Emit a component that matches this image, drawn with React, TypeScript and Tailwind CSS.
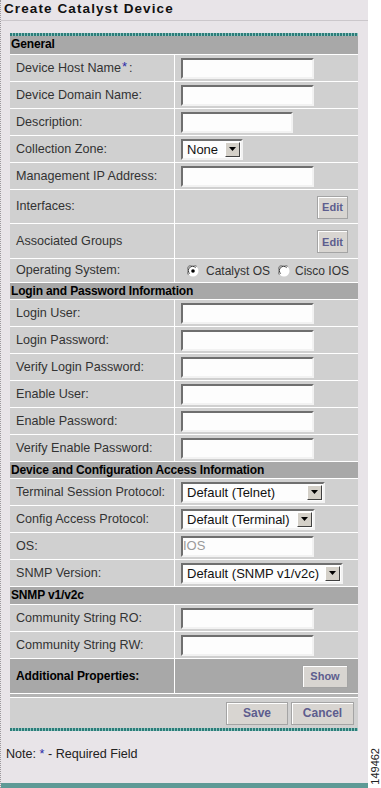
import React from "react";

// Classic sunken text field edge, shared by inputs and selects.
const inset =
  "border-2 border-t-[#6f6f6f] border-l-[#6f6f6f] border-b-[#f2f2f2] border-r-[#f2f2f2] bg-[#fdfdfd]";

function Header({ children, first }: { children: React.ReactNode; first?: boolean }) {
  return (
    <div
      className={
        first
          ? "h-[18px] bg-[#a8a8a8] pl-[1px] text-[12px] font-bold leading-[17px] tracking-[-0.15px] text-black"
          : "h-[17px] border-t border-white bg-[#a8a8a8] pl-[1px] text-[12px] font-bold leading-[16px] tracking-[-0.15px] text-black"
      }
    >
      {children}
    </div>
  );
}

function Row({
  label,
  h = "h-[27px]",
  children,
}: {
  label: React.ReactNode;
  h?: string;
  children?: React.ReactNode;
}) {
  return (
    <div className={`flex border-t border-white bg-[#d0d0d0] ${h}`}>
      <div className="flex w-[165px] shrink-0 items-center border-r border-white pl-[6px] text-[12.6px] text-[#333]">
        {label}
      </div>
      <div className="flex flex-1 items-center pl-[6px]">{children}</div>
    </div>
  );
}

function Field({ w = "w-[133px]" }: { w?: string }) {
  return <div className={`h-[21px] ${inset} ${w}`} />;
}

function Select({ value, w }: { value: string; w: string }) {
  return (
    <div className={`flex h-[21px] items-center ${inset} ${w}`}>
      <span className="flex-1 truncate pl-[4px] text-[13px] leading-[17px] text-[#111]">{value}</span>
      <span className="mr-[1px] flex h-[15px] w-[15px] items-center justify-center border border-t-white border-l-white border-b-[#404040] border-r-[#404040] bg-[#d4d0c8]">
        <svg width="7" height="4" viewBox="0 0 7 4">
          <path d="M0 0h7L3.5 4z" fill="#000" />
        </svg>
      </span>
    </div>
  );
}

function Radio({ checked }: { checked?: boolean }) {
  return (
    <svg width="12" height="12" viewBox="0 0 12 12" className="shrink-0">
      <circle cx="6" cy="6" r="5.5" fill="#fff" />
      <path d="M1.6 9.6A5 5 0 0 1 9.6 1.6" fill="none" stroke="#8a8a8a" strokeWidth="1.3" />
      <path d="M2.6 8.6A3.6 3.6 0 0 1 8.6 2.6" fill="none" stroke="#3a3a3a" strokeWidth="1" />
      {checked && <circle cx="6" cy="6" r="1.8" fill="#000" />}
    </svg>
  );
}

function Btn({ children, w }: { children: React.ReactNode; w: string }) {
  return (
    <button
      className={`h-[23px] border border-[#a4a4a4] bg-[#d8d5d1] text-[11px] font-bold text-[#5d5d8e] shadow-[inset_1px_1px_0_#ffffff] ${w}`}
    >
      {children}
    </button>
  );
}

export default function App() {
  return (
    <div className="flex h-[788px] w-[381px] bg-white font-['Liberation_Sans',Arial,sans-serif]">
      <div className="flex w-[368px] flex-col border-l border-dotted border-l-[#9c989c] bg-[#e8e4e8]">
        <div className="h-[21px] border-b border-[#cbc7cb] pl-[3px] pt-[1px] text-[13.5px] font-bold leading-[16px] tracking-[1.1px] text-[#111]">
          Create Catalyst Device
        </div>

        <div className="ml-[9px] mt-[12px] w-[348px]">
          <div className="h-[3px] bg-[repeating-linear-gradient(90deg,#2c7d79_0_2px,#8ec3bf_2px_3px)]" />
          <Header first>General</Header>
          <Row
            label={
              <>
                Device Host Name
                <sup className="relative -top-[1px] ml-[1px] text-[13px] text-[#2a2aa8]">*</sup>
                <span className="ml-[2px]">:</span>
              </>
            }
          >
            <Field />
          </Row>
          <Row label="Device Domain Name:">
            <Field />
          </Row>
          <Row label="Description:">
            <Field w="w-[112px]" />
          </Row>
          <Row label="Collection Zone:">
            <Select value="None" w="w-[62px]" />
          </Row>
          <Row label="Management IP Address:">
            <Field />
          </Row>
          <Row label="Interfaces:" h="h-[34px]">
            <div className="ml-auto mr-[10px]">
              <Btn w="w-[31px]">Edit</Btn>
            </div>
          </Row>
          <Row label="Associated Groups" h="h-[35px]">
            <div className="ml-auto mr-[10px]">
              <Btn w="w-[31px]">Edit</Btn>
            </div>
          </Row>
          <Row label="Operating System:" h="h-[24px]">
            <div className="flex items-center pl-[6px] text-[12px] text-[#333]">
              <Radio checked />
              <span className="ml-[7px]">Catalyst OS</span>
              <span className="ml-[8px]">
                <Radio />
              </span>
              <span className="ml-[5px]">Cisco IOS</span>
            </div>
          </Row>

          <Header>Login and Password Information</Header>
          <Row label="Login User:">
            <Field />
          </Row>
          <Row label="Login Password:">
            <Field />
          </Row>
          <Row label="Verify Login Password:">
            <Field />
          </Row>
          <Row label="Enable User:">
            <Field />
          </Row>
          <Row label="Enable Password:">
            <Field />
          </Row>
          <Row label="Verify Enable Password:">
            <Field />
          </Row>

          <Header>Device and Configuration Access Information</Header>
          <Row label="Terminal Session Protocol:">
            <Select value="Default (Telnet)" w="w-[144px]" />
          </Row>
          <Row label="Config Access Protocol:">
            <Select value="Default (Terminal)" w="w-[134px]" />
          </Row>
          <Row label="OS:">
            <div className={`flex h-[21px] w-[133px] items-center text-[13px] text-[#9a9a9a] ${inset}`}>IOS</div>
          </Row>
          <Row label="SNMP Version:">
            <Select value="Default (SNMP v1/v2c)" w="w-[162px]" />
          </Row>

          <div className="h-[18px] border-t border-white bg-[#a8a8a8] pl-[1px] text-[12px] font-bold leading-[17px] tracking-[-0.15px] text-black">
            SNMP v1/v2c
          </div>
          <Row label="Community String RO:">
            <Field />
          </Row>
          <Row label="Community String RW:">
            <Field />
          </Row>

          <div className="flex h-[35px] border-t border-white bg-[#a8a8a8]">
            <div className="flex w-[165px] shrink-0 items-center border-r border-white pl-[6px] text-[12px] font-bold tracking-[-0.1px] text-black">
              Additional Properties:
            </div>
            <div className="flex flex-1 items-center justify-end pr-[10px]">
              <Btn w="w-[46px]">Show</Btn>
            </div>
          </div>
          <div className="h-[5px] border-y border-white bg-[#b4b4b4]" />
          <div className="flex h-[30px] items-center justify-end gap-[3px] bg-[#d0d0d0] pr-[4px]">
            <Btn w="w-[62px] text-[12px]">Save</Btn>
            <Btn w="w-[63px] text-[12px]">Cancel</Btn>
          </div>
          <div className="h-[3px] bg-[repeating-linear-gradient(90deg,#2c7d79_0_2px,#8ec3bf_2px_3px)]" />
        </div>

        <div className="mt-[16px] pl-[5px] text-[12.6px] leading-[14px] text-[#222]">
          Note: <span className="text-[#2a2aa8]">*</span> - Required Field
        </div>
        <div className="mt-auto h-[5px] bg-[#5e9a96]" />
      </div>

      <div className="flex w-[13px] flex-col items-center justify-end pb-[3px]">
        <span className="rotate-180 text-[11px] leading-[12px] text-[#222] [writing-mode:vertical-rl]">149462</span>
      </div>
    </div>
  );
}
